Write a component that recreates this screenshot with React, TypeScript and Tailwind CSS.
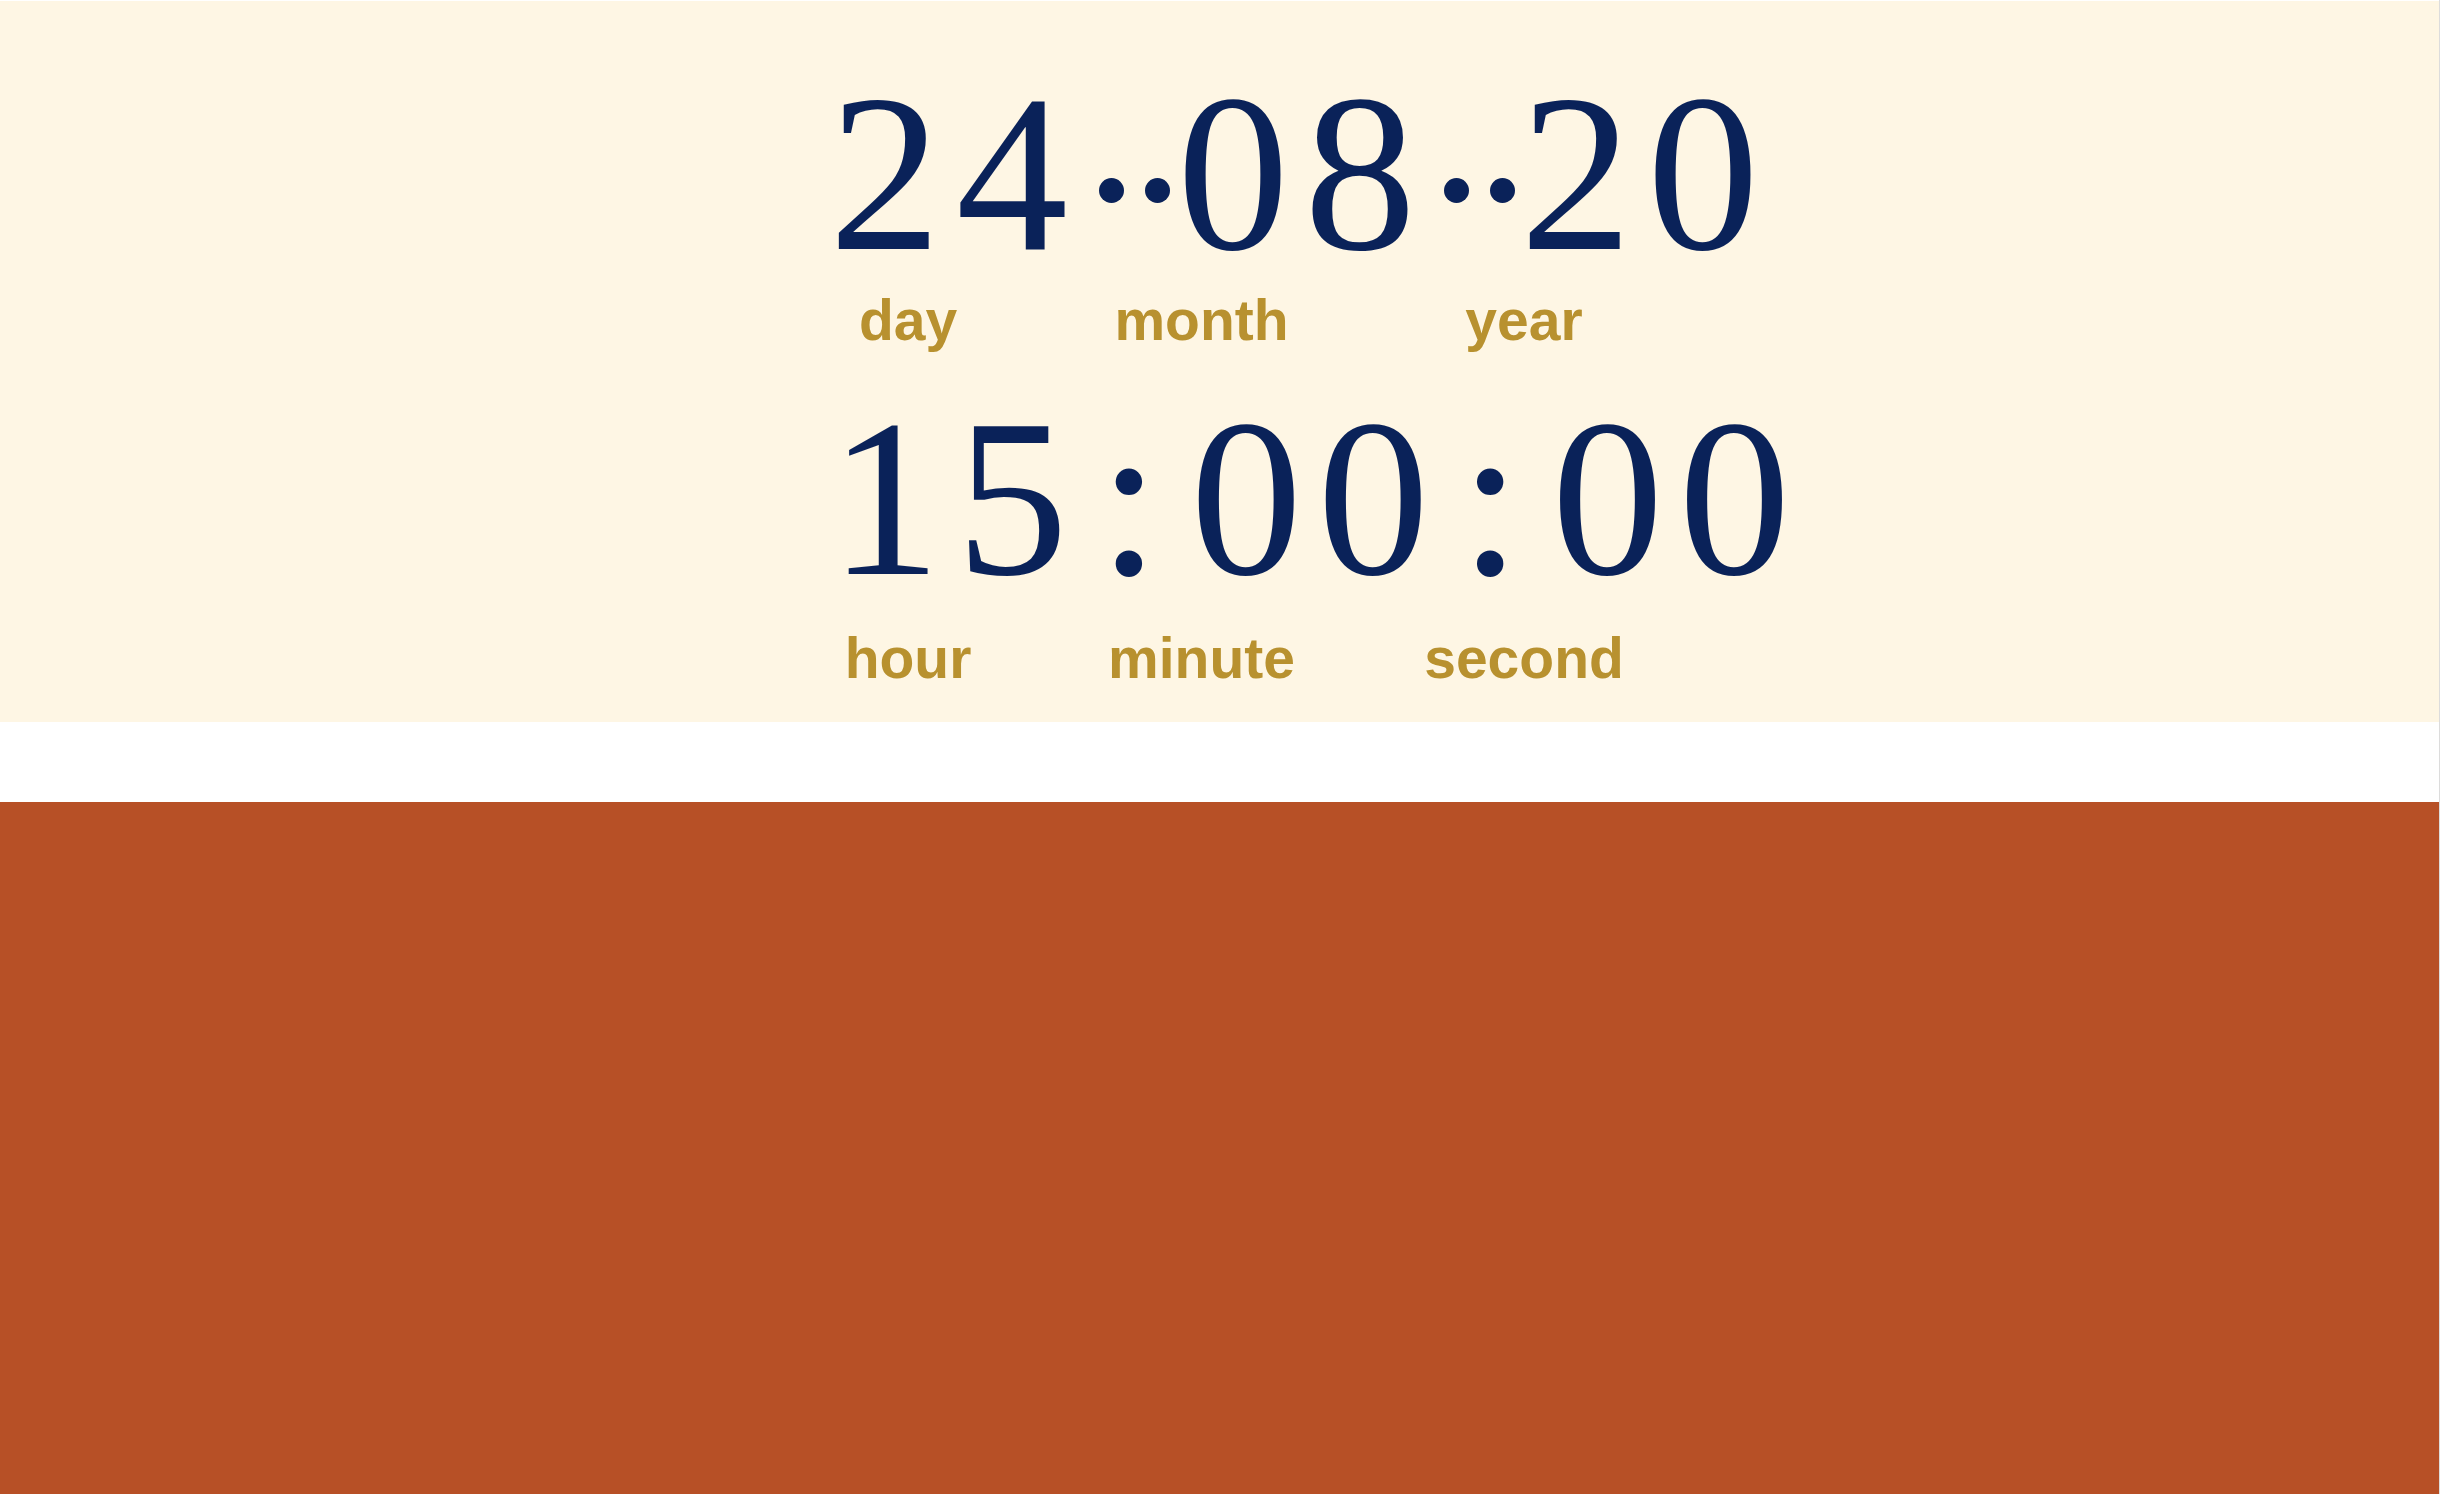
const serif = "font-['Liberation_Serif','Times_New_Roman',serif]"
const sans = "font-['Liberation_Sans',Arial,sans-serif]"

function LabelRow({ labels }: { labels: string[] }) {
  const widths = ['w-[158px]', 'w-[429px]', 'w-[216px]']
  return (
    <div className={`flex ${sans} text-[57px] leading-none font-bold text-[#b8912f]`}>
      {labels.map((label, i) => (
        <span key={label} className={`${widths[i]} shrink-0 text-center`}>
          {label}
        </span>
      ))}
    </div>
  )
}

// two dots between the date parts
function Dots({ className }: { className: string }) {
  return (
    <span aria-hidden className={`mt-[117px] flex gap-[21px] self-start ${className}`}>
      <span className="size-[25px] rounded-full bg-[#0a2259]" />
      <span className="size-[25px] rounded-full bg-[#0a2259]" />
    </span>
  )
}

export default function App() {
  return (
    <div className="flex min-h-screen flex-col border-r border-[#dcdcdc] bg-white pt-px">
      <section className="h-[721px] bg-[#fef6e4] pt-[60px] pl-[829px]">
        <div className={`flex ${serif} text-[224px] leading-none text-[#0a2259]`}>
          <span className="tracking-[15px]">24</span>
          <Dots className="ml-[16px] mr-[7px]" />
          <span className="tracking-[15px]">08</span>
          <Dots className="ml-[13px] mr-[5px]" />
          <span className="tracking-[15px]">20</span>
        </div>
        <div className="mt-[7px]">
          <LabelRow labels={['day', 'month', 'year']} />
        </div>
        <div className={`mt-[37px] flex ${serif} text-[224px] leading-none text-[#0a2259]`}>
          <span className="tracking-[15px]">15</span>
          <span className="mx-[15px] tracking-[15px]">:</span>
          <span className="tracking-[15px]">00</span>
          <span className="mx-[15px] tracking-[15px]">:</span>
          <span className="tracking-[15px]">00</span>
        </div>
        <div className="mt-[20px]">
          <LabelRow labels={['hour', 'minute', 'second']} />
        </div>
      </section>
      <div className="h-[80px]" />
      <section className="flex-1 bg-[#b75026]" />
    </div>
  )
}
